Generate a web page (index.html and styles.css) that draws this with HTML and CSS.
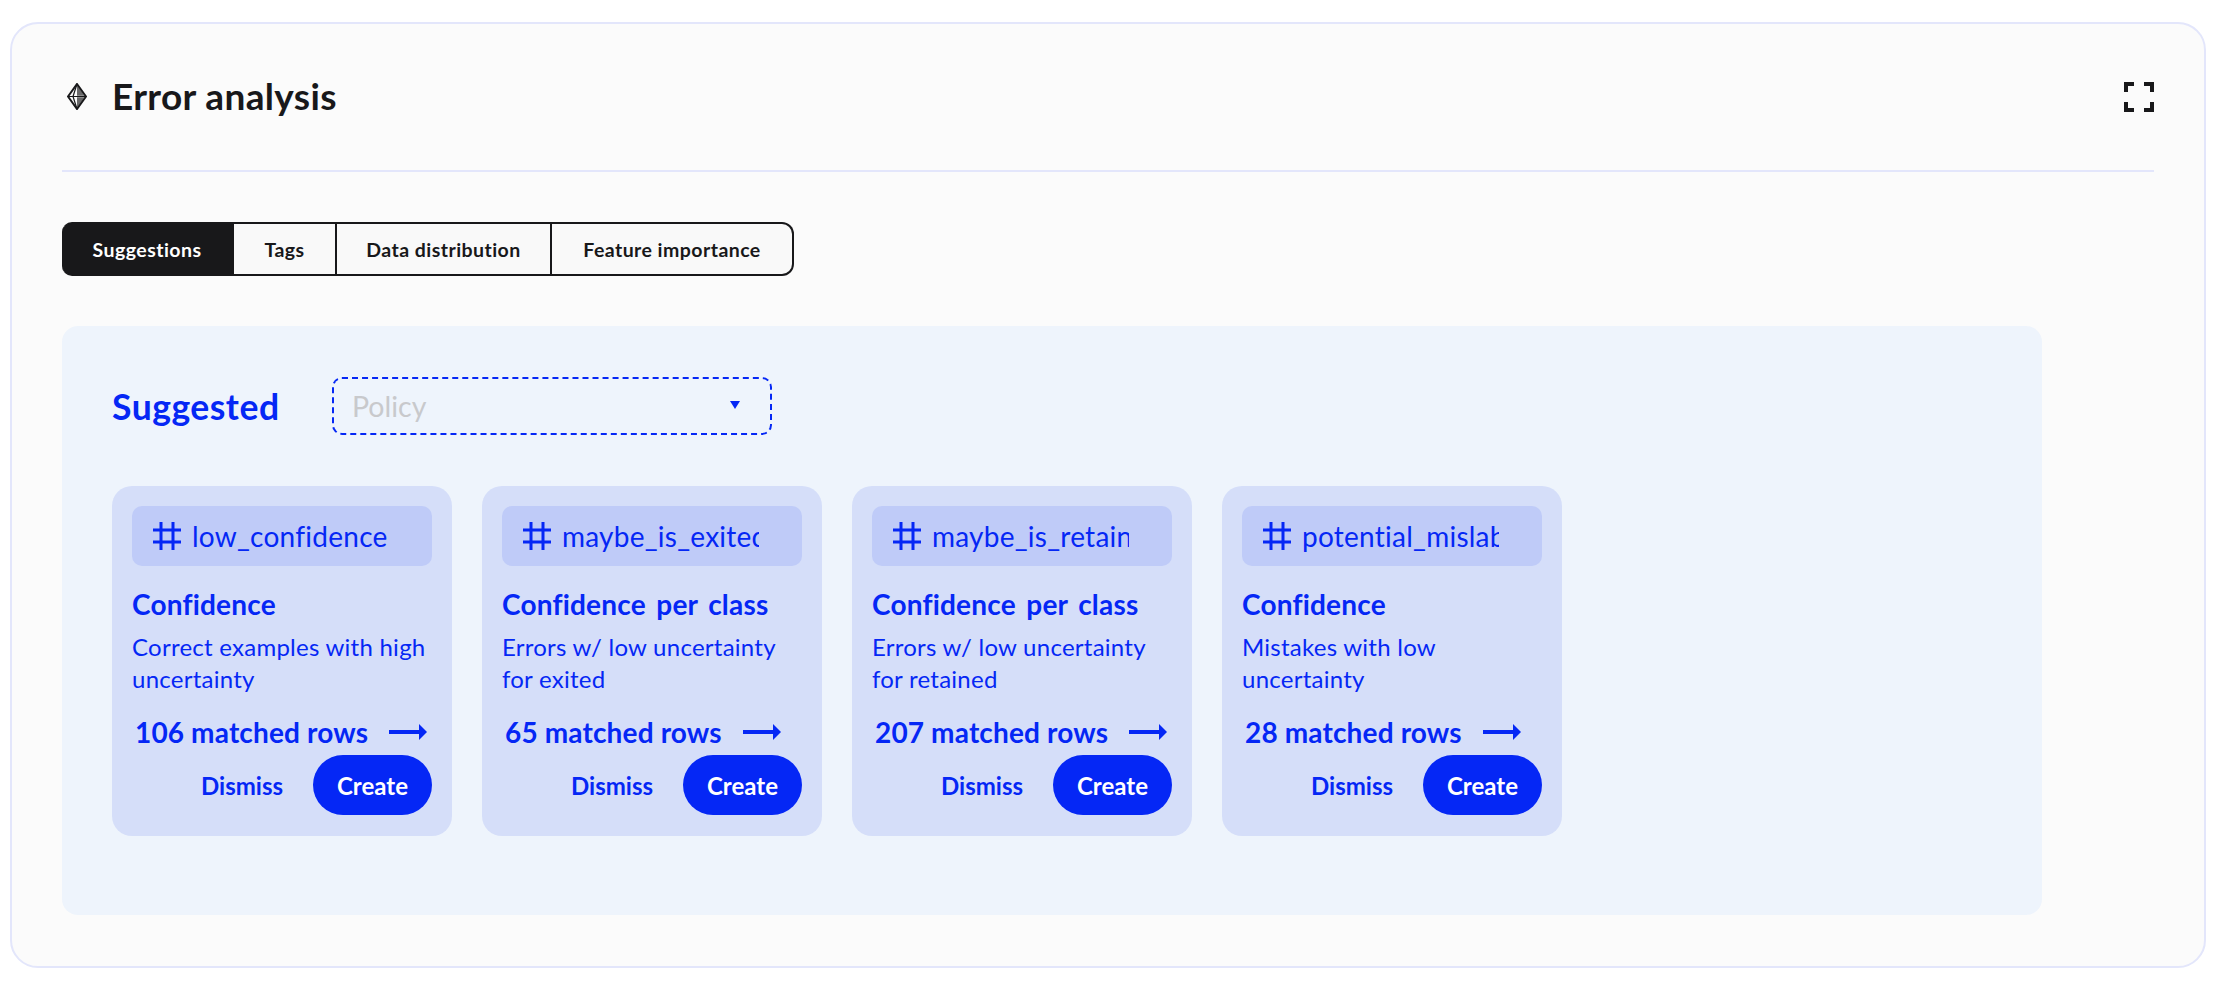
FILE: index.html
```html
<!DOCTYPE html>
<html lang="en">
<head>
<meta charset="utf-8">
<title>Error analysis</title>
<link rel="stylesheet" href="styles.css">
</head>
<body>
<main class="panel">
  <header class="head">
    <div class="head-left">
      <svg class="gem" width="20" height="27" viewBox="0 0 20 27" fill="none"><path d="M10 1 19 13.5 10 26 1 13.5Z" stroke="#18181a" stroke-width="2"/><path d="M10 1 6 13.5 10 26M1 13.5H19" stroke="#18181a" stroke-width="1.2"/><path d="M10 2 17.5 12.8H10ZM10 14.2H17.5L10 25Z" fill="#18181a" fill-opacity=".65"/></svg>
      <h1 class="title">Error analysis</h1>
    </div>
    <svg class="expand" width="30" height="30" viewBox="0 0 30 30" fill="none" stroke="#18181a" stroke-width="4"><path d="M10 2H2V10M20 2H28V10M2 20V28H10M28 20V28H20"/></svg>
  </header>
  <nav class="tabs">
    <div class="tab tab-active tab-a">Suggestions</div>
    <div class="tab tab-b">Tags</div>
    <div class="tab tab-c">Data distribution</div>
    <div class="tab tab-d">Feature importance</div>
  </nav>
  <section class="board">
    <div class="board-head">
      <h2 class="board-title">Suggested</h2>
      <div class="select"><span class="placeholder">Policy</span><span class="caret"></span></div>
    </div>
    <div class="cards">
      <article class="card">
        <div class="tag"><svg class="hash" width="28" height="28" viewBox="0 0 28 28" fill="none" stroke="#0527f5" stroke-width="3"><path d="M8 0V28M20 0V28M0 8H28M0 20H28"/></svg><span class="tag-name">low_confidence</span></div>
        <h3 class="card-title">Confidence</h3>
        <p class="card-desc">Correct examples with high uncertainty</p>
        <div class="match"><span class="match-text">106 matched rows</span><svg class="arrow" width="38" height="16" viewBox="0 0 38 16" fill="#0527f5"><path d="M0 6H30V0L38 8 30 16V10H0Z"/></svg></div>
        <div class="actions"><span class="dismiss">Dismiss</span><span class="create">Create</span></div>
      </article>
      <article class="card">
        <div class="tag"><svg class="hash" width="28" height="28" viewBox="0 0 28 28" fill="none" stroke="#0527f5" stroke-width="3"><path d="M8 0V28M20 0V28M0 8H28M0 20H28"/></svg><span class="tag-name">maybe_is_exited</span></div>
        <h3 class="card-title">Confidence per class</h3>
        <p class="card-desc">Errors w/ low uncertainty for exited</p>
        <div class="match"><span class="match-text">65 matched rows</span><svg class="arrow" width="38" height="16" viewBox="0 0 38 16" fill="#0527f5"><path d="M0 6H30V0L38 8 30 16V10H0Z"/></svg></div>
        <div class="actions"><span class="dismiss">Dismiss</span><span class="create">Create</span></div>
      </article>
      <article class="card">
        <div class="tag"><svg class="hash" width="28" height="28" viewBox="0 0 28 28" fill="none" stroke="#0527f5" stroke-width="3"><path d="M8 0V28M20 0V28M0 8H28M0 20H28"/></svg><span class="tag-name">maybe_is_retained</span></div>
        <h3 class="card-title">Confidence per class</h3>
        <p class="card-desc">Errors w/ low uncertainty for retained</p>
        <div class="match"><span class="match-text">207 matched rows</span><svg class="arrow" width="38" height="16" viewBox="0 0 38 16" fill="#0527f5"><path d="M0 6H30V0L38 8 30 16V10H0Z"/></svg></div>
        <div class="actions"><span class="dismiss">Dismiss</span><span class="create">Create</span></div>
      </article>
      <article class="card">
        <div class="tag"><svg class="hash" width="28" height="28" viewBox="0 0 28 28" fill="none" stroke="#0527f5" stroke-width="3"><path d="M8 0V28M20 0V28M0 8H28M0 20H28"/></svg><span class="tag-name">potential_mislabels</span></div>
        <h3 class="card-title">Confidence</h3>
        <p class="card-desc">Mistakes with low uncertainty</p>
        <div class="match"><span class="match-text">28 matched rows</span><svg class="arrow" width="38" height="16" viewBox="0 0 38 16" fill="#0527f5"><path d="M0 6H30V0L38 8 30 16V10H0Z"/></svg></div>
        <div class="actions"><span class="dismiss">Dismiss</span><span class="create">Create</span></div>
      </article>
    </div>
  </section>
</main>
</body>
</html>
```
FILE: styles.css
```css
* { box-sizing: border-box; }
html, body { margin: 0; padding: 0; background: #ffffff; }
body { padding: 22px 26px 16px 10px; font-family: "Lato", "Liberation Sans", sans-serif; color: #18181a; }
.panel { width: 2196px; height: 946px; background: #fbfbfb; border: 2px solid #e3e6fb; border-radius: 28px; padding: 0 50px; }
.head { height: 148px; border-bottom: 2px solid #e3e6fb; display: flex; align-items: center; justify-content: space-between; padding-bottom: 2px; }
.head-left { display: flex; align-items: center; gap: 25px; }
.gem { display: block; margin-left: 5px; }
.title { margin: 0; font-size: 37px; font-weight: 700; line-height: 44px; letter-spacing: .35px; }
.expand { display: block; margin-top: 1px; }
.tabs { display: flex; width: 732px; height: 54px; margin-top: 50px; }
.tab { display: flex; align-items: center; justify-content: center; height: 54px; font-size: 19.5px; font-weight: 700; background: #f9f9f9; border: 2px solid #18181a; border-left: 0; letter-spacing: .45px; }
.tab-active { background: #18181a; color: #ffffff; border-radius: 10px 0 0 10px; }
.tab-a { width: 172px; }
.tab-b { width: 103px; }
.tab-c { width: 215px; }
.tab-d { width: 242px; border-radius: 0 12px 12px 0; }
.board { width: 1980px; height: 589px; margin-top: 50px; background: #eef4fc; border-radius: 16px; padding: 51px 50px 0; }
.board-head { display: flex; align-items: center; gap: 52px; height: 58px; }
.board-title { margin: 0; width: 168px; font-size: 35.5px; font-weight: 700; color: #0527f5; letter-spacing: .5px; white-space: nowrap; }
.select { width: 440px; height: 58px; border: 2px dashed #0527f5; border-radius: 10px; display: flex; align-items: center; justify-content: space-between; padding: 0 30px 0 18px; }
.placeholder { font-size: 28.5px; color: #c8c9cc; }
.caret { width: 0; height: 0; border-left: 5px solid transparent; border-right: 5px solid transparent; border-top: 8px solid #0527f5; margin-bottom: 2px; }
.cards { display: flex; gap: 30px; margin-top: 51px; }
.card { width: 340px; height: 350px; background: #d5def9; border-radius: 20px; padding: 20px; color: #0527f5; display: flex; flex-direction: column; }
.tag { height: 60px; background: #bfcbf8; border-radius: 10px; padding-left: 21px; display: flex; align-items: center; gap: 11px; flex: none; }
.hash { flex: none; }
.tag-name { width: 197px; overflow: hidden; white-space: nowrap; font-size: 28px; letter-spacing: .25px; }
.card-title { margin: 20px 0 0; font-size: 28px; line-height: 36px; font-weight: 700; letter-spacing: .2px; word-spacing: 3.5px; white-space: nowrap; }
.card-desc { margin: 9px 0 0; font-size: 24px; line-height: 32px; height: 64px; letter-spacing: .25px; }
.match { display: flex; align-items: center; gap: 21px; margin-top: 17px; height: 40px; padding: 0 0 0 3px; flex: none; }
.match-text { font-size: 28px; font-weight: 700; letter-spacing: .15px; white-space: nowrap; }
.arrow { display: block; }
.actions { display: flex; align-items: center; justify-content: flex-end; gap: 30px; margin-top: 3px; }
.dismiss { font-size: 24px; font-weight: 700; }
.create { width: 119px; height: 60px; border-radius: 30px; background: #0527f5; color: #ffffff; font-size: 24px; font-weight: 700; display: flex; align-items: center; justify-content: center; }
```
